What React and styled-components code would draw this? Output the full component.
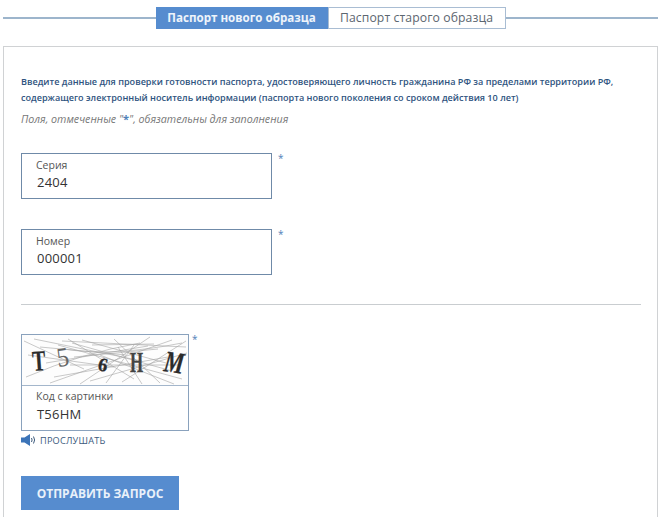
import styled, { createGlobalStyle } from "styled-components";

const GlobalStyle = createGlobalStyle`
  html, body {
    margin: 0;
    padding: 0;
    background: #fff;
    height: 517px;
    overflow: hidden;
    font-family: "Open Sans", "Liberation Sans", sans-serif;
  }
`;

const Tabs = styled.div`
  display: flex;
  align-items: center;
  width: 655px;
  height: 22px;
  margin: 7px 0 0 3px;
  &::before,
  &::after {
    content: "";
    flex: 1;
    height: 2px;
    background: #9db5cc;
  }
`;
const Tab = styled.div`
  flex: none;
  height: 22px;
  line-height: 20px;
  box-sizing: border-box;
  text-align: center;
  white-space: nowrap;
  width: ${({ $active }) => ($active ? "172px" : "178px")};
  font-size: ${({ $active }) => ($active ? "11.6px" : "12.2px")};
  font-weight: ${({ $active }) => ($active ? 700 : 400)};
  letter-spacing: ${({ $active }) => ($active ? "0" : "0.1px")};
  color: ${({ $active }) => ($active ? "#eef4fb" : "#5c6670")};
  background: ${({ $active }) => ($active ? "#568ccf" : "#fff")};
  border: 1px solid ${({ $active }) => ($active ? "#568ccf" : "#a9bdd3")};
`;
const Panel = styled.div`
  margin: 17px 0 0 3px;
  width: 655px;
  height: 480px;
  box-sizing: border-box;
  border: 1px solid #d0d2d4;
  padding: 27px 16px 0 17px;
`;
const Intro = styled.p`
  margin: 0;
  font-size: 9.1px;
  line-height: 15.5px;
  font-weight: 600;
  color: #2f5480;
  white-space: nowrap;
`;
const Hint = styled.p`
  margin: 7px 0 0;
  font-size: 10.7px;
  line-height: 14px;
  font-style: italic;
  color: #777;
  white-space: nowrap;
`;
const Star = styled.span`
  color: #4f81b8;
  font-style: normal;
  font-size: 11px;
  font-weight: 700;
`;
const Fields = styled.div`
  display: flex;
  flex-direction: column;
  gap: 30px;
  margin-top: 27px;
`;
const FieldRow = styled.div`
  display: flex;
  align-items: flex-start;
  gap: ${({ $gap }) => $gap}px;
`;
const RowStar = styled.span`
  color: #4f81b8;
  font-size: 10px;
  line-height: 10px;
`;
const Field = styled.div`
  width: 251px;
  height: 46px;
  box-sizing: border-box;
  border: 1px solid #6f8aa8;
  padding: 4px 14px;
`;
const Label = styled.div`
  font-size: 10.5px;
  line-height: 14px;
  color: #555;
`;
const Value = styled.div`
  font-size: 13px;
  line-height: 18px;
  margin: 1px 0 0 1px;
  color: #333;
  letter-spacing: 0.2px;
`;
const CaptchaValue = styled(Value)`
  margin-top: 2px;
`;
const Divider = styled.hr`
  margin: 29px 0 29px;
  border: 0;
  height: 1px;
  background: #c9cdd0;
`;
const CaptchaBox = styled.div`
  width: 168px;
  height: 97px;
  box-sizing: border-box;
  border: 1px solid #8aa2bd;
`;
const CaptchaPicture = styled.svg`
  display: block;
  width: 166px;
  height: 50px;
  border-bottom: 1px solid #a3b6cb;
`;
const CaptchaInput = styled.div`
  padding: 3px 14px 0;
`;
const Listen = styled.div`
  display: flex;
  align-items: center;
  gap: 3px;
  height: 16px;
  margin-top: 1px;
  font-size: 9.2px;
  letter-spacing: 0.2px;
  color: #3c5a7c;
`;
const Submit = styled.button`
  display: block;
  width: 158px;
  height: 34px;
  margin-top: 28px;
  padding: 0;
  border: 0;
  background: #568ccf;
  color: #e9f1fa;
  font-family: inherit;
  font-size: 12px;
  font-weight: 700;
`;

const noise = [
  "M2 6 L62 34", "M12 4 L120 26", "M28 48 L150 5", "M36 10 L160 44", "M40 6 L164 12",
  "M58 49 L128 2", "M50 8 L150 36", "M6 20 L92 32", "M68 46 L165 18", "M46 4 L112 44",
  "M92 4 L138 48", "M24 28 L126 11", "M78 20 L152 49", "M100 47 L164 6", "M32 42 L146 22",
  "M4 42 Q60 18 118 8", "M42 14 Q90 22 160 8", "M52 22 L136 14", "M60 5 L144 28", "M18 12 L104 20",
  "M84 48 L112 10", "M120 49 L96 12", "M70 10 L132 9", "M48 30 L158 30",
];

function Captcha() {
  return (
    <CaptchaPicture viewBox="0 0 166 50">
      <rect width="166" height="50" fill="#fdfdfd" />
      {noise.map((d) => (
        <path key={d} d={d} stroke="#a5a5a5" strokeWidth="0.6" fill="none" />
      ))}
      <g fontFamily="Liberation Serif, serif" fontWeight="700" fill="#2b2b2b" stroke="#2b2b2b" strokeWidth="0.3">
        <text fontSize="29" transform="translate(11 36) rotate(-4) scale(0.68 1)">T</text>
        <text fontSize="27" fontWeight="400" fill="#666" stroke="none" transform="translate(36 32) rotate(-8) scale(0.9 1)">5</text>
        <text fontSize="19" transform="translate(75 35) rotate(12)">6</text>
        <text fontSize="30" fill="#444" stroke="#444" transform="translate(108 37) scale(0.56 1)">H</text>
        <text fontSize="30" fontStyle="italic" transform="translate(141 36) rotate(8) scale(0.74 1)">M</text>
      </g>
    </CaptchaPicture>
  );
}

function SpeakerIcon() {
  return (
    <svg width="16" height="12" viewBox="0 0 16 12">
      <path d="M0 3.5h3.5L9 0v12L3.5 8.500H0z" fill="#3c74b8" />
      <path d="M10.500 4q1.200 2 0 4M12.500 2.500q2.200 3.500 0 7" stroke="#3c5a7c" strokeWidth="1" fill="none" />
    </svg>
  );
}

export default function App() {
  return (
    <>
      <GlobalStyle />
      <Tabs>
        <Tab $active>Паспорт нового образца</Tab>
        <Tab>Паспорт старого образца</Tab>
      </Tabs>
      <Panel>
        <Intro>
          Введите данные для проверки готовности паспорта, удостоверяющего личность гражданина РФ за пределами территории РФ,
          <br />
          содержащего электронный носитель информации (паспорта нового поколения со сроком действия 10 лет)
        </Intro>
        <Hint>
          Поля, отмеченные "<Star>*</Star>", обязательны для заполнения
        </Hint>
        <Fields>
          <FieldRow $gap={6}>
            <Field>
              <Label>Серия</Label>
              <Value>2404</Value>
            </Field>
            <RowStar>*</RowStar>
          </FieldRow>
          <FieldRow $gap={6}>
            <Field>
              <Label>Номер</Label>
              <Value>000001</Value>
            </Field>
            <RowStar>*</RowStar>
          </FieldRow>
        </Fields>
        <Divider />
        <FieldRow $gap={3}>
          <CaptchaBox>
            <Captcha />
            <CaptchaInput>
              <Label>Код с картинки</Label>
              <CaptchaValue>T56HM</CaptchaValue>
            </CaptchaInput>
          </CaptchaBox>
          <RowStar>*</RowStar>
        </FieldRow>
        <Listen>
          <SpeakerIcon />
          ПРОСЛУШАТЬ
        </Listen>
        <Submit>ОТПРАВИТЬ ЗАПРОС</Submit>
      </Panel>
    </>
  );
}
